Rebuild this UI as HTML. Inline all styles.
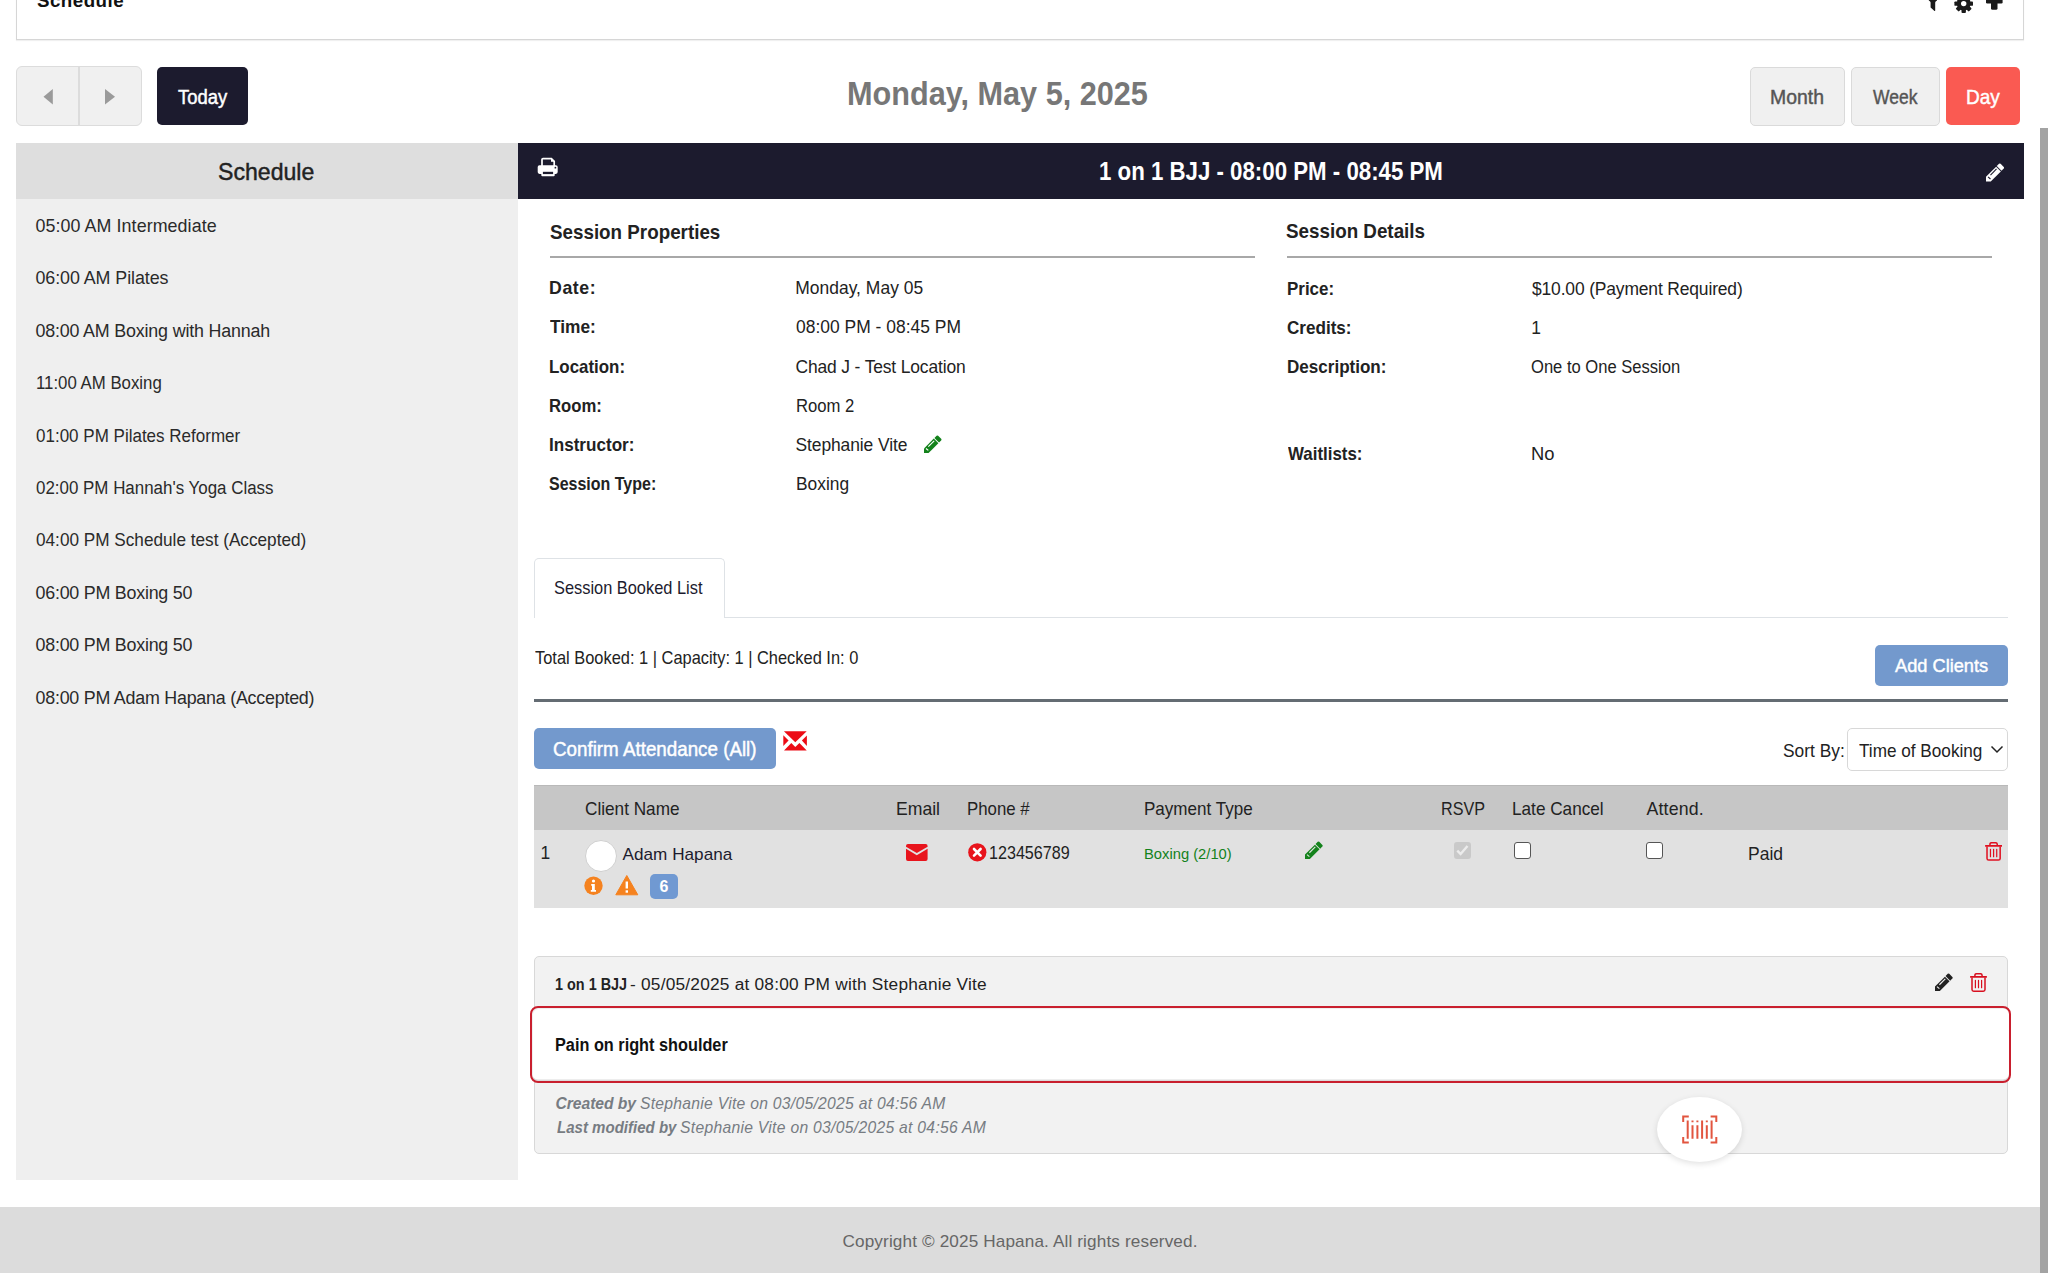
<!DOCTYPE html>
<html><head><meta charset="utf-8"><title>Schedule</title>
<style>
html,body{margin:0;padding:0;width:2048px;height:1273px;overflow:hidden;background:#fff;}
body{position:relative;font-family:"Liberation Sans",sans-serif;}
.t{position:absolute;white-space:nowrap;}
.r{position:absolute;}
</style></head><body>
<div class="r" style="left:16px;top:-10px;width:2008px;height:50px;background:#fff;border:1px solid #d6d6d6;border-top:none;box-sizing:border-box;box-shadow:0 1px 1px rgba(0,0,0,.06)"></div>
<div class="t" style="left:37.00px;top:-7.99px;font-size:18.31px;line-height:18.31px;letter-spacing:0.464px;transform:scaleX(1.0240);transform-origin:0 0;color:#111;font-weight:bold;">Schedule</div>
<svg class="r" style="left:1920px;top:-10px" width="100" height="30" viewBox="1920 -10 100 30">
<path d="M1928.8 -10 H1937 V0.6 Q1935.2 1.6 1935.2 2.6 V10.4 Q1935 11.4 1934.2 10.8 L1930.6 7.4 V2.6 Q1930.6 1.6 1928.8 0.6 Z" fill="#1a1a1a"/>
<g transform="translate(1963.7,3.6)"><g fill="#1a1a1a"><circle r="6.9"/><rect x="-2.2" y="-9.3" width="4.4" height="4.5" rx="0.9" transform="rotate(0)"/><rect x="-2.2" y="-9.3" width="4.4" height="4.5" rx="0.9" transform="rotate(45)"/><rect x="-2.2" y="-9.3" width="4.4" height="4.5" rx="0.9" transform="rotate(90)"/><rect x="-2.2" y="-9.3" width="4.4" height="4.5" rx="0.9" transform="rotate(135)"/><rect x="-2.2" y="-9.3" width="4.4" height="4.5" rx="0.9" transform="rotate(180)"/><rect x="-2.2" y="-9.3" width="4.4" height="4.5" rx="0.9" transform="rotate(225)"/><rect x="-2.2" y="-9.3" width="4.4" height="4.5" rx="0.9" transform="rotate(270)"/><rect x="-2.2" y="-9.3" width="4.4" height="4.5" rx="0.9" transform="rotate(315)"/></g><circle r="2.7" fill="#fff"/></g>
<rect x="1986" y="-4" width="16.6" height="7.5" rx="1.2" fill="#1a1a1a"/>
<rect x="1991" y="-10" width="6.5" height="19.7" rx="1.5" fill="#1a1a1a"/>
</svg>
<div class="r" style="left:16px;top:66px;width:126px;height:60px;background:#f0f0f0;border:1px solid #dcdcdc;border-radius:6px;box-sizing:border-box"></div>
<div class="r" style="left:78px;top:67px;width:1.5px;height:58px;background:#dcdcdc"></div>
<svg class="r" style="left:40px;top:85px" width="80" height="24" viewBox="40 85 80 24"><path d="M52.8 89 L52.8 104.5 L43.5 96.7Z" fill="#9a9a9a"/><path d="M105 89 L105 104.5 L115 96.7Z" fill="#9a9a9a"/></svg>
<div class="r" style="left:157px;top:67px;width:91px;height:58px;background:#1c1b2e;border-radius:5px"></div>
<div class="t" style="left:178.00px;top:87.70px;font-size:19.91px;line-height:19.91px;letter-spacing:0.000px;transform:scaleX(0.9264);transform-origin:0 0;color:#fff;-webkit-text-stroke:0.45px currentColor">Today</div>
<div class="t" style="left:847.30px;top:76.81px;font-size:33.43px;line-height:33.43px;letter-spacing:0.000px;transform:scaleX(0.9169);transform-origin:0 0;color:#777;font-weight:bold;">Monday, May 5, 2025</div>
<div class="r" style="left:1750px;top:67px;width:95px;height:59px;background:#f0f0f0;border:1px solid #dadada;border-radius:5px;box-sizing:border-box"></div>
<div class="t" style="left:1770.35px;top:87.22px;font-size:20.78px;line-height:20.78px;letter-spacing:0.000px;transform:scaleX(0.9355);transform-origin:0 0;color:#555;-webkit-text-stroke:0.45px currentColor">Month</div>
<div class="r" style="left:1851px;top:67px;width:89px;height:59px;background:#f0f0f0;border:1px solid #dadada;border-radius:5px;box-sizing:border-box"></div>
<div class="t" style="left:1872.50px;top:87.22px;font-size:20.78px;line-height:20.78px;letter-spacing:0.000px;transform:scaleX(0.8421);transform-origin:0 0;color:#555;-webkit-text-stroke:0.45px currentColor">Week</div>
<div class="r" style="left:1946px;top:67px;width:74px;height:58px;background:#fa5a52;border-radius:5px"></div>
<div class="t" style="left:1966.00px;top:87.22px;font-size:20.78px;line-height:20.78px;letter-spacing:0.000px;transform:scaleX(0.9176);transform-origin:0 0;color:#fff;-webkit-text-stroke:0.45px currentColor">Day</div>
<div class="r" style="left:16px;top:143px;width:502px;height:1037px;background:#efefef"></div>
<div class="r" style="left:16px;top:143px;width:502px;height:56px;background:#dedede"></div>
<div class="t" style="left:218.35px;top:159.90px;font-size:24.71px;line-height:24.71px;letter-spacing:0.000px;transform:scaleX(0.9350);transform-origin:0 0;color:#222;-webkit-text-stroke:0.45px currentColor">Schedule</div>
<div class="t" style="left:35.50px;top:218.00px;font-size:17.88px;line-height:17.88px;letter-spacing:0.071px;color:#2a2a2a;">05:00 AM Intermediate</div>
<div class="t" style="left:35.50px;top:270.41px;font-size:17.88px;line-height:17.88px;letter-spacing:-0.068px;color:#2a2a2a;">06:00 AM Pilates</div>
<div class="t" style="left:35.50px;top:322.81px;font-size:17.88px;line-height:17.88px;letter-spacing:-0.177px;color:#2a2a2a;">08:00 AM Boxing with Hannah</div>
<div class="t" style="left:35.50px;top:375.21px;font-size:17.88px;line-height:17.88px;letter-spacing:0.000px;transform:scaleX(0.9407);transform-origin:0 0;color:#2a2a2a;">11:00 AM Boxing</div>
<div class="t" style="left:35.50px;top:427.60px;font-size:17.88px;line-height:17.88px;letter-spacing:0.000px;transform:scaleX(0.9524);transform-origin:0 0;color:#2a2a2a;">01:00 PM Pilates Reformer</div>
<div class="t" style="left:35.50px;top:480.00px;font-size:17.88px;line-height:17.88px;letter-spacing:0.000px;transform:scaleX(0.9475);transform-origin:0 0;color:#2a2a2a;">02:00 PM Hannah&#x27;s Yoga Class</div>
<div class="t" style="left:35.50px;top:532.41px;font-size:17.88px;line-height:17.88px;letter-spacing:0.000px;transform:scaleX(0.9619);transform-origin:0 0;color:#2a2a2a;">04:00 PM Schedule test (Accepted)</div>
<div class="t" style="left:35.50px;top:584.81px;font-size:17.88px;line-height:17.88px;letter-spacing:-0.229px;color:#2a2a2a;">06:00 PM Boxing 50</div>
<div class="t" style="left:35.50px;top:637.21px;font-size:17.88px;line-height:17.88px;letter-spacing:-0.229px;color:#2a2a2a;">08:00 PM Boxing 50</div>
<div class="t" style="left:35.50px;top:689.60px;font-size:17.88px;line-height:17.88px;letter-spacing:-0.231px;color:#2a2a2a;">08:00 PM Adam Hapana (Accepted)</div>
<div class="r" style="left:518px;top:143px;width:1506px;height:56px;background:#1c1b2e"></div>
<div class="t" style="left:1099.40px;top:158.91px;font-size:25.15px;line-height:25.15px;letter-spacing:0.000px;transform:scaleX(0.8853);transform-origin:0 0;color:#fff;font-weight:bold;">1 on 1 BJJ - 08:00 PM - 08:45 PM</div>
<svg class="r" style="left:536px;top:156px" width="24" height="22" viewBox="536 156 24 22">
<path d="M542 166 V159.6 Q542 158.6 543 158.6 H551.4 L554.2 161.4 V166" fill="none" stroke="#fff" stroke-width="1.7"/>
<path d="M551 158 L554.8 161.8 H551 Z" fill="#fff"/>
<rect x="537.7" y="165.3" width="20" height="8.6" rx="1.8" fill="#fff"/>
<rect x="541.3" y="170.3" width="13.4" height="5.9" rx="1" fill="#fff"/>
<rect x="542.9" y="171.8" width="10.2" height="2.3" fill="#1c1b2e"/>
<circle cx="555.4" cy="167.7" r="0.9" fill="#1c1b2e"/>
</svg>
<svg class="r" style="left:1985.5px;top:163.2px" width="18.6" height="18.6" viewBox="0 0 100 100"><g transform="translate(0,100) rotate(-45)"><path d="M0 0 L18 -18 L95 -18 L95 18 L18 18 Z" fill="#fff"/><path d="M100 -18 H117 Q123 -18 123 -12 V12 Q123 18 117 18 H100 Z" fill="#fff"/><path d="M42 -8 L88 -8" stroke="#1c1b2e" stroke-width="6"/><path d="M25.5 -10 L27 7" stroke="#1c1b2e" stroke-width="6"/></g></svg>
<div class="t" style="left:549.50px;top:221.61px;font-size:20.64px;line-height:20.64px;letter-spacing:0.000px;transform:scaleX(0.9114);transform-origin:0 0;color:#222;font-weight:bold;">Session Properties</div>
<div class="r" style="left:550px;top:256px;width:705px;height:2px;background:#a8a8a8"></div>
<div class="t" style="left:1286.00px;top:221.40px;font-size:20.64px;line-height:20.64px;letter-spacing:0.000px;transform:scaleX(0.9117);transform-origin:0 0;color:#222;font-weight:bold;">Session Details</div>
<div class="r" style="left:1287px;top:256px;width:705px;height:2px;background:#a8a8a8"></div>
<div class="t" style="left:549.00px;top:280.41px;font-size:17.73px;line-height:17.73px;letter-spacing:0.606px;color:#222;font-weight:bold;">Date:</div>
<div class="t" style="left:795.15px;top:280.41px;font-size:17.44px;line-height:17.44px;letter-spacing:0.037px;color:#222;">Monday, May 05</div>
<div class="t" style="left:550.00px;top:319.41px;font-size:17.73px;line-height:17.73px;letter-spacing:0.000px;transform:scaleX(0.9757);transform-origin:0 0;color:#222;font-weight:bold;">Time:</div>
<div class="t" style="left:796.00px;top:319.41px;font-size:17.44px;line-height:17.44px;letter-spacing:0.013px;color:#222;">08:00 PM - 08:45 PM</div>
<div class="t" style="left:549.00px;top:358.60px;font-size:17.73px;line-height:17.73px;letter-spacing:0.000px;transform:scaleX(0.9539);transform-origin:0 0;color:#222;font-weight:bold;">Location:</div>
<div class="t" style="left:795.50px;top:358.60px;font-size:17.44px;line-height:17.44px;letter-spacing:-0.145px;color:#222;">Chad J - Test Location</div>
<div class="t" style="left:549.00px;top:397.81px;font-size:17.73px;line-height:17.73px;letter-spacing:0.000px;transform:scaleX(0.9427);transform-origin:0 0;color:#222;font-weight:bold;">Room:</div>
<div class="t" style="left:795.50px;top:397.80px;font-size:17.44px;line-height:17.44px;letter-spacing:0.000px;transform:scaleX(0.9563);transform-origin:0 0;color:#222;">Room 2</div>
<div class="t" style="left:549.00px;top:436.60px;font-size:17.73px;line-height:17.73px;letter-spacing:0.000px;transform:scaleX(0.9642);transform-origin:0 0;color:#222;font-weight:bold;">Instructor:</div>
<div class="t" style="left:795.50px;top:436.60px;font-size:17.44px;line-height:17.44px;letter-spacing:-0.092px;color:#222;">Stephanie Vite</div>
<div class="t" style="left:549.00px;top:476.00px;font-size:17.73px;line-height:17.73px;letter-spacing:0.000px;transform:scaleX(0.9023);transform-origin:0 0;color:#222;font-weight:bold;">Session Type:</div>
<div class="t" style="left:795.50px;top:476.01px;font-size:17.44px;line-height:17.44px;letter-spacing:0.000px;transform:scaleX(0.9947);transform-origin:0 0;color:#222;">Boxing</div>
<svg class="r" style="left:923.8px;top:434.6px" width="18" height="18" viewBox="0 0 100 100"><g transform="translate(0,100) rotate(-45)"><path d="M0 0 L18 -18 L95 -18 L95 18 L18 18 Z" fill="#13821b"/><path d="M100 -18 H117 Q123 -18 123 -12 V12 Q123 18 117 18 H100 Z" fill="#13821b"/><path d="M42 -8 L88 -8" stroke="#fff" stroke-width="6"/><path d="M25.5 -10 L27 7" stroke="#fff" stroke-width="6"/></g></svg>
<div class="t" style="left:1286.50px;top:280.60px;font-size:17.73px;line-height:17.73px;letter-spacing:0.000px;transform:scaleX(0.9561);transform-origin:0 0;color:#222;font-weight:bold;">Price:</div>
<div class="t" style="left:1532.00px;top:280.60px;font-size:17.44px;line-height:17.44px;letter-spacing:-0.146px;color:#222;">$10.00 (Payment Required)</div>
<div class="t" style="left:1286.50px;top:319.60px;font-size:17.73px;line-height:17.73px;letter-spacing:0.000px;transform:scaleX(0.9639);transform-origin:0 0;color:#222;font-weight:bold;">Credits:</div>
<div class="t" style="left:1531.35px;top:319.60px;font-size:17.44px;line-height:17.44px;letter-spacing:0.000px;color:#222;">1</div>
<div class="t" style="left:1286.50px;top:359.31px;font-size:17.73px;line-height:17.73px;letter-spacing:0.000px;transform:scaleX(0.9622);transform-origin:0 0;color:#222;font-weight:bold;">Description:</div>
<div class="t" style="left:1531.35px;top:359.30px;font-size:17.44px;line-height:17.44px;letter-spacing:0.000px;transform:scaleX(0.9500);transform-origin:0 0;color:#222;">One to One Session</div>
<div class="t" style="left:1287.50px;top:445.70px;font-size:17.73px;line-height:17.73px;letter-spacing:0.000px;transform:scaleX(0.9525);transform-origin:0 0;color:#222;font-weight:bold;">Waitlists:</div>
<div class="t" style="left:1531.35px;top:445.72px;font-size:17.44px;line-height:17.44px;letter-spacing:0.000px;transform:scaleX(1.0524);transform-origin:0 0;color:#222;">No</div>
<div class="r" style="left:534px;top:617px;width:1474px;height:1px;background:#dee2e6"></div>
<div class="r" style="left:534px;top:558px;width:191px;height:60px;background:#fff;border:1px solid #dee2e6;border-bottom:none;border-radius:5px 5px 0 0;box-sizing:border-box"></div>
<div class="t" style="left:554.35px;top:579.00px;font-size:18.17px;line-height:18.17px;letter-spacing:0.000px;transform:scaleX(0.9023);transform-origin:0 0;color:#1c1b2e;">Session Booked List</div>
<div class="t" style="left:535.00px;top:649.70px;font-size:17.59px;line-height:17.59px;letter-spacing:0.000px;transform:scaleX(0.9337);transform-origin:0 0;color:#222;">Total Booked: 1 | Capacity: 1 | Checked In: 0</div>
<div class="r" style="left:1875px;top:645px;width:133px;height:41px;background:#7399cd;border-radius:5px"></div>
<div class="t" style="left:1895.30px;top:656.00px;font-size:19.19px;line-height:19.19px;letter-spacing:0.000px;transform:scaleX(0.9494);transform-origin:0 0;color:#fff;-webkit-text-stroke:0.45px currentColor">Add Clients</div>
<div class="r" style="left:534px;top:699px;width:1474px;height:2.7000000000000455px;background:#646c73"></div>
<div class="r" style="left:534px;top:728px;width:242px;height:41px;background:#7399cd;border-radius:5px"></div>
<div class="t" style="left:553.30px;top:739.60px;font-size:19.77px;line-height:19.77px;letter-spacing:0.000px;transform:scaleX(0.9501);transform-origin:0 0;color:#fff;-webkit-text-stroke:0.45px currentColor">Confirm Attendance (All)</div>
<svg class="r" style="left:780px;top:728px" width="30" height="26" viewBox="780 728 30 26" fill="#ec0c16">
<path d="M783.9 731.3 H806.7 L795.3 742.3 Z"/>
<path d="M783.3 735.3 L788.6 740.6 L783.3 745.9 Z"/>
<path d="M806.9 735.5 L801.9 740.6 L806.9 745.9 Z"/>
<path d="M784 750.4 L791.3 743.1 L795.3 746.9 L799.4 743.1 L806.7 750.4 Z"/>
</svg>
<div class="t" style="left:1782.50px;top:743.00px;font-size:17.73px;line-height:17.73px;letter-spacing:0.000px;transform:scaleX(0.9792);transform-origin:0 0;color:#222;">Sort By:</div>
<div class="r" style="left:1847px;top:728px;width:161px;height:43px;background:#fff;border:1px solid #d8d8d8;border-radius:5px;box-sizing:border-box"></div>
<div class="t" style="left:1858.50px;top:743.00px;font-size:17.88px;line-height:17.88px;letter-spacing:0.000px;transform:scaleX(0.9612);transform-origin:0 0;color:#222;">Time of Booking</div>
<svg class="r" style="left:1990px;top:744px" width="14" height="12" viewBox="0 0 14 12"><path d="M1.5 2.5 L7 8 L12.5 2.5" fill="none" stroke="#222" stroke-width="1.5"/></svg>
<div class="r" style="left:534px;top:785px;width:1474px;height:45px;background:#c6c6c6;border-top:1px solid #b9b9b9;box-sizing:border-box"></div>
<div class="r" style="left:534px;top:830px;width:1474px;height:78px;background:#e1e1e1"></div>
<div class="t" style="left:584.50px;top:800.91px;font-size:17.73px;line-height:17.73px;letter-spacing:0.000px;transform:scaleX(0.9693);transform-origin:0 0;color:#222;">Client Name</div>
<div class="t" style="left:895.50px;top:800.91px;font-size:17.73px;line-height:17.73px;letter-spacing:0.000px;transform:scaleX(0.9938);transform-origin:0 0;color:#222;">Email</div>
<div class="t" style="left:967.35px;top:800.91px;font-size:17.73px;line-height:17.73px;letter-spacing:0.000px;transform:scaleX(0.9488);transform-origin:0 0;color:#222;">Phone #</div>
<div class="t" style="left:1144.35px;top:800.91px;font-size:17.73px;line-height:17.73px;letter-spacing:0.000px;transform:scaleX(0.9620);transform-origin:0 0;color:#222;">Payment Type</div>
<div class="t" style="left:1440.50px;top:800.91px;font-size:17.73px;line-height:17.73px;letter-spacing:0.000px;transform:scaleX(0.9116);transform-origin:0 0;color:#222;">RSVP</div>
<div class="t" style="left:1512.40px;top:800.91px;font-size:17.73px;line-height:17.73px;letter-spacing:0.000px;transform:scaleX(0.9694);transform-origin:0 0;color:#222;">Late Cancel</div>
<div class="t" style="left:1646.50px;top:800.91px;font-size:17.73px;line-height:17.73px;letter-spacing:0.175px;color:#222;">Attend.</div>
<div class="t" style="left:540.50px;top:845.10px;font-size:17.44px;line-height:17.44px;letter-spacing:0.000px;color:#222;">1</div>
<div class="r" style="left:585px;top:840px;width:32px;height:32px;background:#fff;border:1px solid #d0d0d0;border-radius:50%;box-sizing:border-box"></div>
<div class="t" style="left:622.50px;top:846.32px;font-size:17.15px;line-height:17.15px;letter-spacing:0.018px;color:#1c1b2e;">Adam Hapana</div>
<svg class="r" style="left:584px;top:876px" width="20" height="20" viewBox="0 0 20 20"><circle cx="9.5" cy="9.7" r="9.2" fill="#f5821f"/>
<circle cx="9.5" cy="5" r="1.6" fill="#fff"/><path d="M7.2 8 h3.6 v6 h1.2 v1.8 h-5.2 v-1.8 h1.2 v-4.2 h-0.8z" fill="#fff"/></svg>
<svg class="r" style="left:615px;top:875px" width="24" height="21" viewBox="0 0 24 21"><path d="M11.8 0.5 L22.8 19.8 L0.8 19.8 Z" fill="#f5821f" stroke="#f5821f" stroke-width="1" stroke-linejoin="round"/>
<rect x="10.6" y="6.5" width="2.4" height="7" fill="#fff"/><rect x="10.6" y="15.3" width="2.4" height="2.4" fill="#fff"/></svg>
<div class="r" style="left:650px;top:874px;width:28px;height:25px;background:#7099d2;border-radius:5px"></div>
<div class="t" style="left:659.50px;top:879.11px;font-size:15.99px;line-height:15.99px;letter-spacing:0.000px;color:#fff;font-weight:bold;">6</div>
<svg class="r" style="left:906.3px;top:843.6px" width="21.6" height="17" viewBox="0 0 22 18" preserveAspectRatio="none">
<path d="M0 2 a2 2 0 0 1 2 -2 h18 a2 2 0 0 1 2 2 v0.8 L11 9.5 L0 2.8 Z" fill="#e8141c"/>
<path d="M0 5 L11 11.8 L22 5 V16 a2 2 0 0 1 -2 2 H2 a2 2 0 0 1 -2 -2 Z" fill="#e8141c"/></svg>
<svg class="r" style="left:967.5px;top:842.5px" width="19" height="19" viewBox="0 0 19 19"><circle cx="9.3" cy="9.3" r="9.1" fill="#e8141c"/>
<path d="M6 6 L12.6 12.6 M12.6 6 L6 12.6" stroke="#fff" stroke-width="2.6" stroke-linecap="round"/></svg>
<div class="t" style="left:989.25px;top:845.10px;font-size:17.88px;line-height:17.88px;letter-spacing:0.000px;transform:scaleX(0.9020);transform-origin:0 0;color:#222;">123456789</div>
<div class="t" style="left:1144.35px;top:846.10px;font-size:15.26px;line-height:15.26px;letter-spacing:0.000px;transform:scaleX(0.9667);transform-origin:0 0;color:#13821b;">Boxing (2/10)</div>
<svg class="r" style="left:1304.8px;top:841px" width="18.2" height="18.2" viewBox="0 0 100 100"><g transform="translate(0,100) rotate(-45)"><path d="M0 0 L18 -18 L95 -18 L95 18 L18 18 Z" fill="#13821b"/><path d="M100 -18 H117 Q123 -18 123 -12 V12 Q123 18 117 18 H100 Z" fill="#13821b"/><path d="M42 -8 L88 -8" stroke="#e1e1e1" stroke-width="6"/><path d="M25.5 -10 L27 7" stroke="#e1e1e1" stroke-width="6"/></g></svg>
<div class="r" style="left:1454px;top:842px;width:17px;height:17px;background:#c9c9c9;border-radius:3px"></div>
<svg class="r" style="left:1454px;top:842px" width="17" height="17" viewBox="0 0 17 17"><path d="M3.3 8.6 L6.6 12 L13.5 4" fill="none" stroke="#ececec" stroke-width="2.4"/></svg>
<div class="r" style="left:1514px;top:842px;width:17px;height:17px;background:#fff;border:1.5px solid #555;border-radius:3px;box-sizing:border-box"></div>
<div class="r" style="left:1646px;top:842px;width:17px;height:17px;background:#fff;border:1.5px solid #555;border-radius:3px;box-sizing:border-box"></div>
<div class="t" style="left:1748.40px;top:845.91px;font-size:17.44px;line-height:17.44px;letter-spacing:0.000px;transform:scaleX(1.0037);transform-origin:0 0;color:#222;">Paid</div>
<svg class="r" style="left:1984.5px;top:842.3px" width="17.2" height="18.8" viewBox="0 0 17 19" preserveAspectRatio="none"><path d="M4.9 3.4 V2.4 Q4.9 0.7 6.6 0.7 H10.4 Q12.1 0.7 12.1 2.4 V3.4" fill="none" stroke="#e01020" stroke-width="1.5"/><rect x="0" y="3" width="17" height="1.8" rx="0.5" fill="#e01020"/><path d="M2 4.6 V16.6 Q2 18.3 3.7 18.3 H13.3 Q15 18.3 15 16.6 V4.6" fill="none" stroke="#e01020" stroke-width="1.5"/><path d="M5.4 7.3 V14.8 M8.5 7.3 V14.8 M11.6 7.3 V14.8" stroke="#e01020" stroke-width="1.2" stroke-linecap="round"/></svg>
<div class="r" style="left:534px;top:956px;width:1474px;height:198px;background:#f2f2f2;border:1px solid #d8d8d8;border-radius:5px;box-sizing:border-box"></div>
<div class="t" style="left:554.50px;top:975.90px;font-size:17.30px;line-height:17.30px;letter-spacing:0.000px;transform:scaleX(0.8340);transform-origin:0 0;color:#222;font-weight:bold;">1 on 1 BJJ</div>
<div class="t" style="left:630.00px;top:975.90px;font-size:17.30px;line-height:17.30px;letter-spacing:0.215px;color:#222;">- 05/05/2025 at 08:00 PM with Stephanie Vite</div>
<svg class="r" style="left:1934.7px;top:973.2px" width="18.2" height="18.2" viewBox="0 0 100 100"><g transform="translate(0,100) rotate(-45)"><path d="M0 0 L18 -18 L95 -18 L95 18 L18 18 Z" fill="#222"/><path d="M100 -18 H117 Q123 -18 123 -12 V12 Q123 18 117 18 H100 Z" fill="#222"/><path d="M42 -8 L88 -8" stroke="#f2f2f2" stroke-width="6"/><path d="M25.5 -10 L27 7" stroke="#f2f2f2" stroke-width="6"/></g></svg>
<svg class="r" style="left:1969.8px;top:972.8px" width="17" height="18.9" viewBox="0 0 17 19" preserveAspectRatio="none"><path d="M4.9 3.4 V2.4 Q4.9 0.7 6.6 0.7 H10.4 Q12.1 0.7 12.1 2.4 V3.4" fill="none" stroke="#d81020" stroke-width="1.5"/><rect x="0" y="3" width="17" height="1.8" rx="0.5" fill="#d81020"/><path d="M2 4.6 V16.6 Q2 18.3 3.7 18.3 H13.3 Q15 18.3 15 16.6 V4.6" fill="none" stroke="#d81020" stroke-width="1.5"/><path d="M5.4 7.3 V14.8 M8.5 7.3 V14.8 M11.6 7.3 V14.8" stroke="#d81020" stroke-width="1.2" stroke-linecap="round"/></svg>
<div class="r" style="left:530.4px;top:1006px;width:1481.1px;height:77px;background:#fff;border:2.7px solid #c91f2e;border-radius:8px;box-sizing:border-box;box-shadow:inset 0 -1.5px 0 #dcdcdc, inset 1px 1px 0 #efefef"></div>
<div class="t" style="left:554.50px;top:1036.51px;font-size:17.44px;line-height:17.44px;letter-spacing:0.000px;transform:scaleX(0.9336);transform-origin:0 0;color:#111;font-weight:bold;">Pain on right shoulder</div>
<div class="t" style="left:555.50px;top:1096.41px;font-size:15.70px;line-height:15.70px;letter-spacing:-0.058px;color:#777c82;font-weight:bold;font-style:italic;">Created by</div>
<div class="t" style="left:640.00px;top:1096.41px;font-size:15.70px;line-height:15.70px;letter-spacing:0.272px;color:#777c82;font-style:italic;">Stephanie Vite on 03/05/2025 at 04:56 AM</div>
<div class="t" style="left:556.50px;top:1120.41px;font-size:15.70px;line-height:15.70px;letter-spacing:0.000px;transform:scaleX(0.9582);transform-origin:0 0;color:#777c82;font-weight:bold;font-style:italic;">Last modified by</div>
<div class="t" style="left:680.00px;top:1120.41px;font-size:15.70px;line-height:15.70px;letter-spacing:0.285px;color:#777c82;font-style:italic;">Stephanie Vite on 03/05/2025 at 04:56 AM</div>
<div class="r" style="left:1657px;top:1097px;width:85px;height:65px;background:#fff;border-radius:50%;box-shadow:0 2px 6px rgba(0,0,0,.12)"></div>
<svg class="r" style="left:1675px;top:1108px" width="50" height="42" viewBox="0 0 50 42" fill="none" stroke="#e2553f" stroke-width="2">
<path d="M8.2 14 V8.4 H13.8 M8.2 29 V34.6 H13.8 M35.6 8.4 H41.3 V14 M35.6 34.6 H41.3 V29"/>
<path d="M12.7 12.5 V30.7 M27.1 12.5 V30.7 M36.6 12.5 V30.7 M17.5 12.5 V14.3 M17.5 17.3 V30.7 M22.4 12.5 V14.3 M22.4 17.3 V30.7 M31.8 12.5 V14.3 M31.8 17.3 V30.7" stroke-width="2"/>
</svg>
<div class="r" style="left:0px;top:1207px;width:2040px;height:66px;background:#dcdcdc"></div>
<div class="t" style="left:842.50px;top:1233.20px;font-size:17.15px;line-height:17.15px;letter-spacing:0.136px;color:#666;">Copyright © 2025 Hapana. All rights reserved.</div>
<div class="r" style="left:2040px;top:0px;width:8px;height:1273px;background:#fff"></div>
<div class="r" style="left:2040px;top:128px;width:8px;height:1145px;background:#a3a3a3"></div>
</body></html>
